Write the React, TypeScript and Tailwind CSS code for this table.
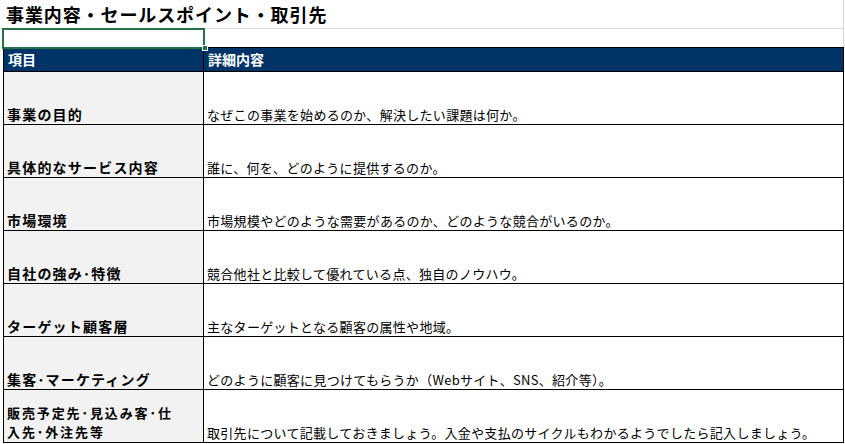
import React from "react";

const rows: { label: React.ReactNode; desc: string }[] = [
  { label: "事業の目的", desc: "なぜこの事業を始めるのか、解決したい課題は何か。" },
  { label: "具体的なサービス内容", desc: "誰に、何を、どのように提供するのか。" },
  { label: "市場環境", desc: "市場規模やどのような需要があるのか、どのような競合がいるのか。" },
  { label: "自社の強み･特徴", desc: "競合他社と比較して優れている点、独自のノウハウ。" },
  { label: "ターゲット顧客層", desc: "主なターゲットとなる顧客の属性や地域。" },
  { label: "集客･マーケティング", desc: "どのように顧客に見つけてもらうか（Webサイト、SNS、紹介等）。" },
  {
    label: (
      <div className="text-[13px] leading-[19px] tracking-[1.9px]">
        <span className="block">販売予定先･見込み客･仕</span>
        <span className="block">入先･外注先等</span>
      </div>
    ),
    desc: "取引先について記載しておきましょう。入金や支払のサイクルもわかるようでしたら記入しましょう。",
  },
];

export default function App() {
  return (
    <div
      className="relative w-[845px] h-[444px] bg-white overflow-hidden text-black"
      style={{ fontFamily: '"Noto Sans CJK JP", "Noto Sans", sans-serif' }}
    >
      <div className="w-[844px] border-r border-[#d9d9d9]">
        {/* title row */}
        <div className="h-[29px] border-b border-[#dadada] pl-[6px] flex items-center">
          <span className="text-[18px] font-bold leading-[22px] tracking-[0.9px]">
            事業内容・セールスポイント・取引先
          </span>
        </div>
        {/* blank row */}
        <div className="h-[18px]" />
      </div>

      {/* table */}
      <div className="ml-[3px] w-[841px] border-l border-r border-black">
        <div className="h-[25px] flex bg-[#003366] border-t border-b border-black text-white font-bold text-[14px]">
          <div className="w-[200px] border-r border-black pl-[4px] flex items-center">項目</div>
          <div className="flex-1 pl-[4px] flex items-center">詳細内容</div>
        </div>
        {rows.map((r, i) => (
          <div key={i} className="h-[53px] flex border-b border-black">
            <div className="w-[200px] shrink-0 bg-[#f2f2f2] border-r border-black pl-[3px] pb-[1px] flex items-end text-[14px] font-bold leading-[17px] tracking-[1.2px]">
              <div>{r.label}</div>
            </div>
            <div className="flex-1 pl-[3px] pb-[1px] flex items-end text-[13px] leading-[17px] tracking-[0.3px] whitespace-nowrap">
              {r.desc}
            </div>
          </div>
        ))}
      </div>

      {/* selection */}
      <div className="absolute left-[2px] top-[28px] w-[203px] h-[21px] border-2 border-[#217346]" />
      <div className="absolute left-[202px] top-[45px] w-[6px] h-[6px] bg-[#217346] border border-white" />
    </div>
  );
}
